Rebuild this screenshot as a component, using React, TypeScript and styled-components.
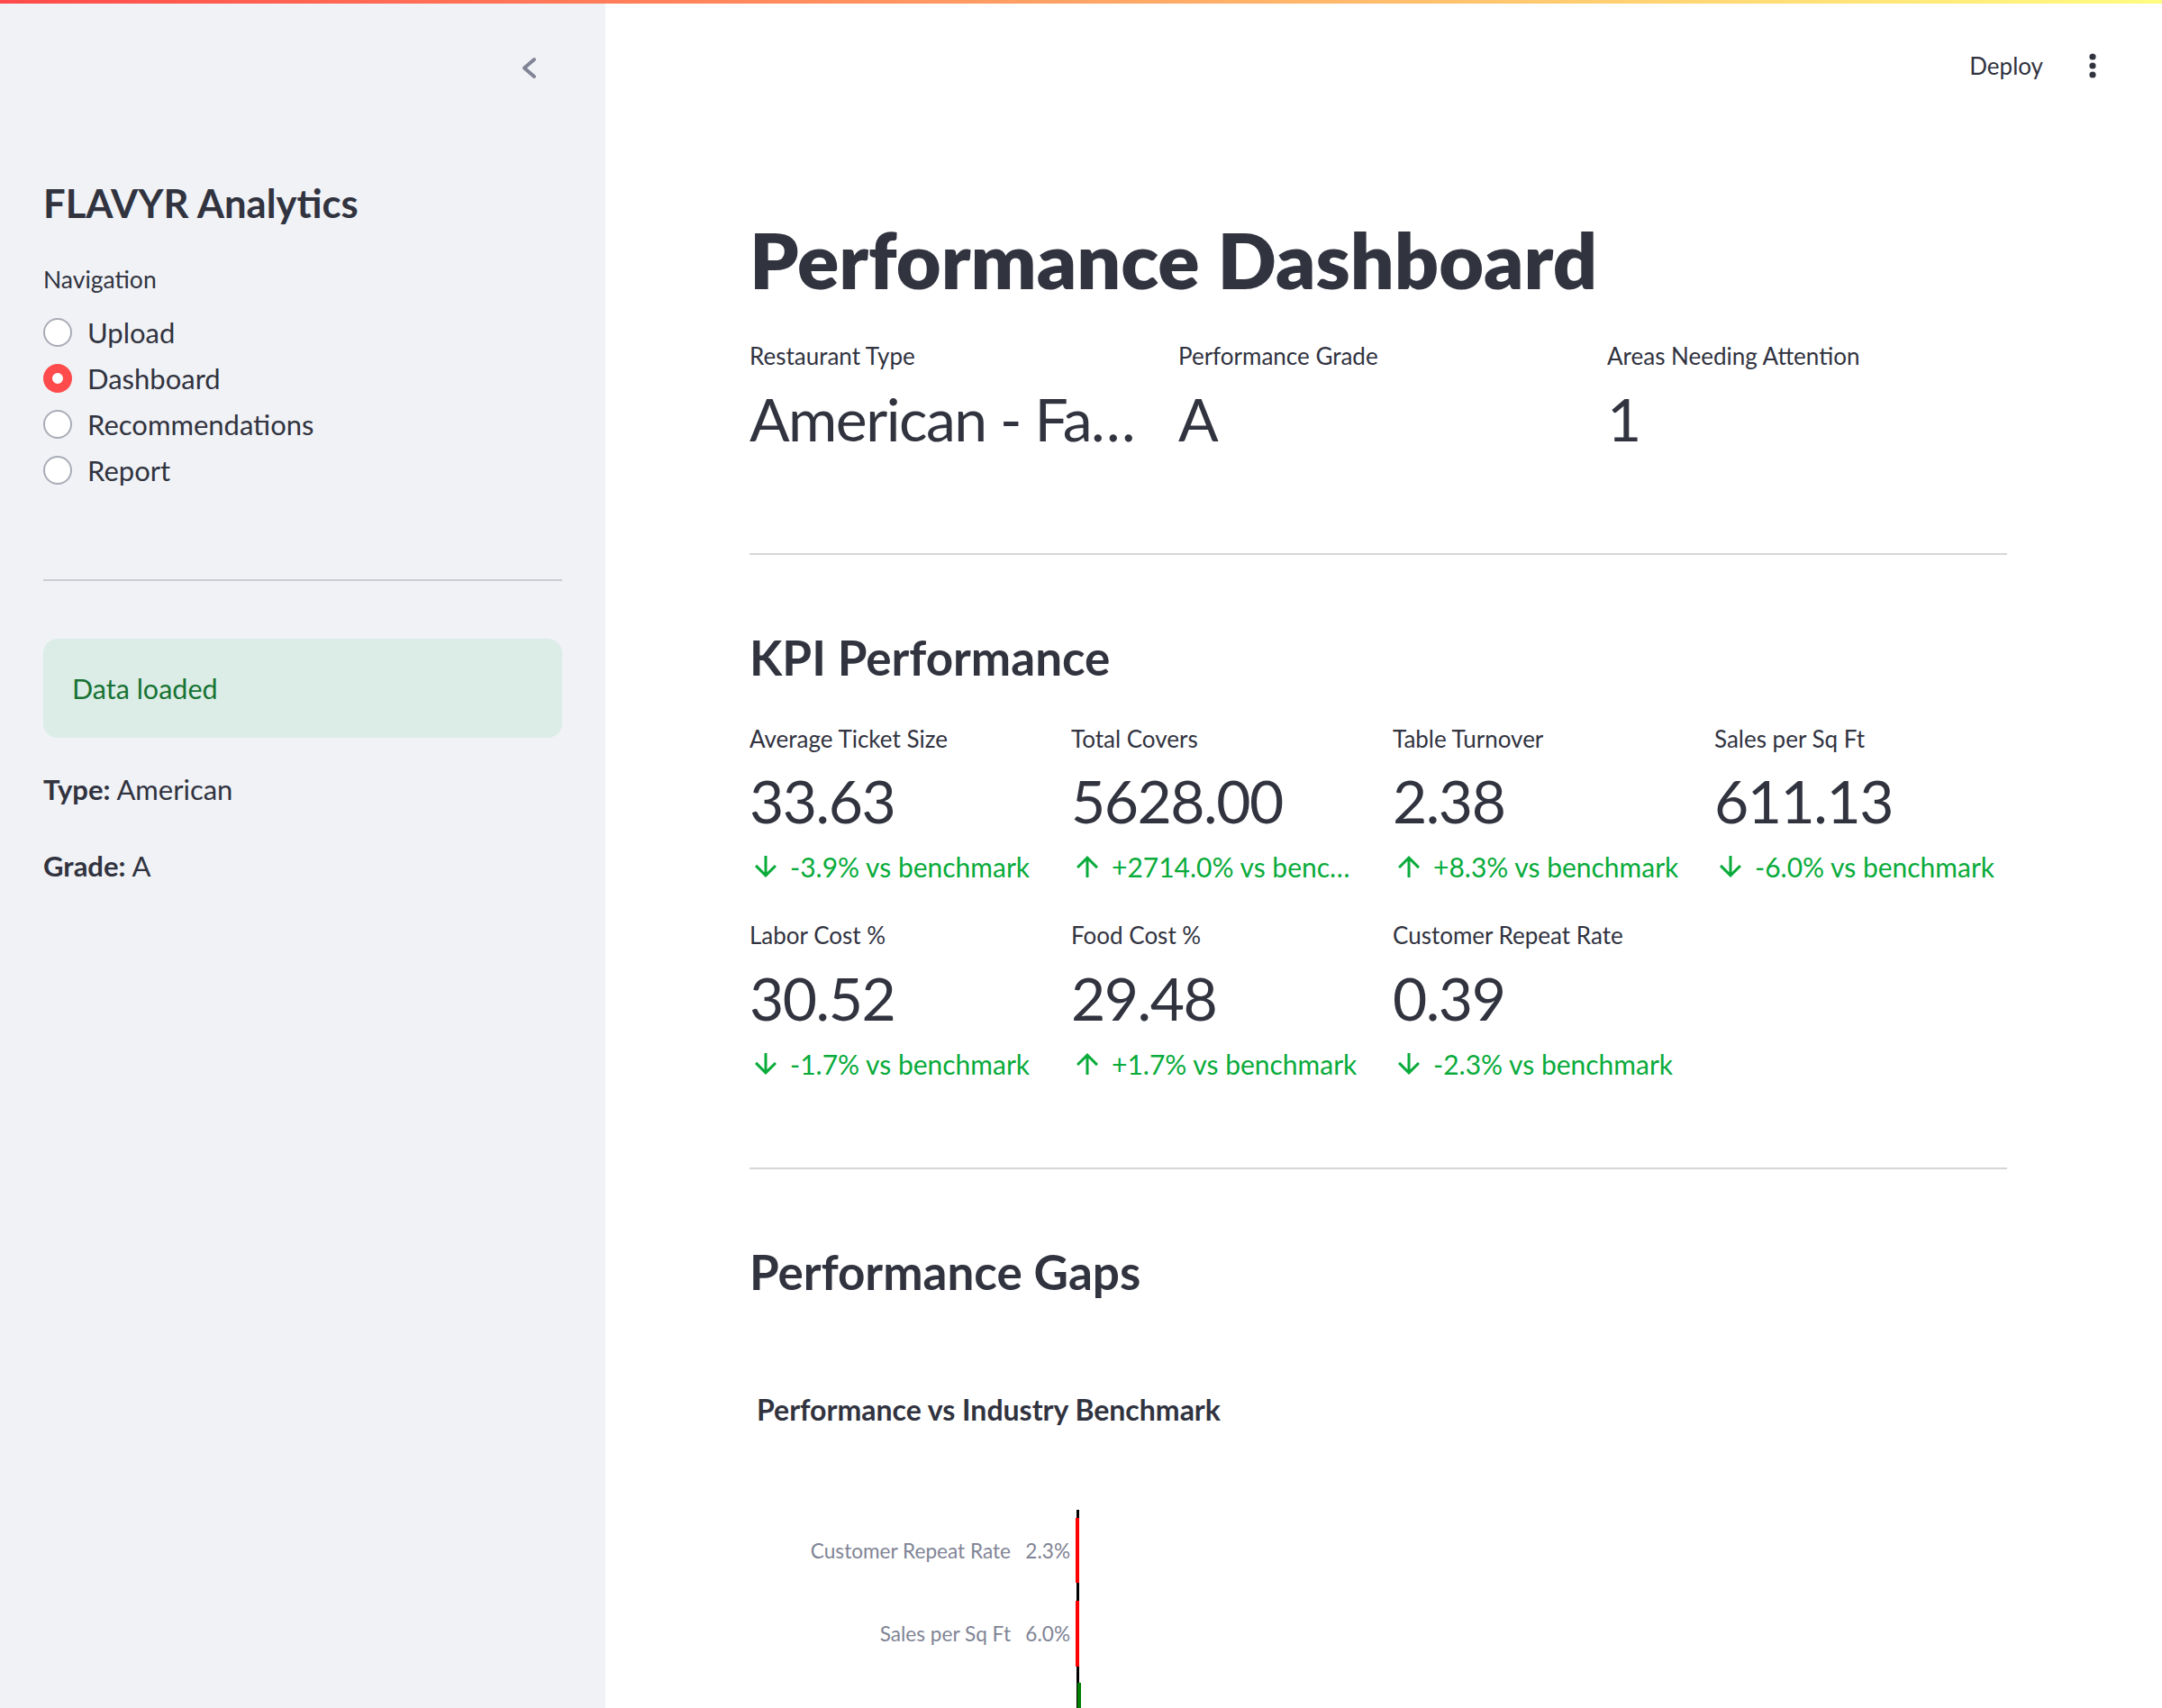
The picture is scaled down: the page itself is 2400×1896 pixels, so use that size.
import React from "react";
import styled, { createGlobalStyle } from "styled-components";

const GlobalStyle = createGlobalStyle`
  html, body { margin: 0; padding: 0; background: #ffffff; }
  body {
    font-family: "Lato", "Source Sans Pro", "Noto Sans", sans-serif;
    color: #31333f;
    -webkit-font-smoothing: antialiased;
  }
  * { box-sizing: border-box; }
`;

const Shell = styled.div`
  width: 2400px;
  height: 1896px;
  overflow: hidden;
  display: flex;
  flex-direction: column;
`;

const Decoration = styled.div`
  flex: none;
  height: 4px;
  background: linear-gradient(90deg, #ff4b4b, #fffd80);
`;

const Body = styled.div`
  flex: 1;
  min-height: 0;
  display: flex;
`;

/* ---------------- Sidebar ---------------- */

const Sidebar = styled.aside`
  flex: none;
  width: 672px;
  background: #f0f2f6;
  padding: 0 48px;
  display: flex;
  flex-direction: column;
`;

const SidebarHeader = styled.div`
  display: flex;
  justify-content: flex-end;
  padding-top: 55px;
  padding-right: 20px;
`;

const CollapseButton = styled.button`
  width: 32px;
  height: 32px;
  padding: 0;
  border: none;
  background: transparent;
  color: #808495;
  display: flex;
`;

const SidebarTitle = styled.h1`
  margin: 104px 0 0;
  font-size: 43.6px;
  font-weight: 700;
  line-height: 60px;
  color: #31333f;
`;

const WidgetLabel = styled.div`
  margin-top: 35px;
  font-size: 26.5px;
  line-height: 40px;
`;

const RadioList = styled.div`
  margin-top: 13px;
  display: flex;
  flex-direction: column;
`;

const RadioRow = styled.label`
  height: 51.2px;
  display: flex;
  align-items: center;
  gap: 17px;
  font-size: 31px;
`;

const RadioCircle = styled.span<{ $checked: boolean }>`
  flex: none;
  width: 32px;
  height: 32px;
  border-radius: 50%;
  background: #ffffff;
  border: ${(p) => (p.$checked ? "10px solid #ff4b4b" : "2px solid #a9acb6")};
`;

const SidebarRule = styled.hr`
  margin: 95px 0 0;
  border: none;
  height: 2px;
  background: #cbcdd3;
`;

const SuccessBox = styled.div`
  margin-top: 64px;
  height: 110px;
  border-radius: 16px;
  background: #dbede6;
  color: #177233;
  padding: 0 32px;
  display: flex;
  align-items: center;
  font-size: 30.5px;
`;

const InfoLine = styled.p<{ $gap: number }>`
  margin: ${(p) => p.$gap}px 0 0;
  font-size: 31px;
  line-height: 51px;
  b { font-weight: 700; }
`;

/* ---------------- Main ---------------- */

const Main = styled.main`
  flex: 1;
  min-width: 0;
  display: flex;
  flex-direction: column;
  background: #ffffff;
`;

const Toolbar = styled.header`
  flex: none;
  height: 137px;
  display: flex;
  justify-content: flex-end;
  align-items: center;
  gap: 35px;
  padding-right: 57px;
`;

const DeployButton = styled.button`
  border: none;
  background: transparent;
  padding: 0;
  font-family: inherit;
  font-size: 26px;
  color: #31333f;
`;

const MenuButton = styled.button`
  width: 40px;
  height: 40px;
  padding: 0;
  border: none;
  background: transparent;
  display: flex;
`;

const Content = styled.div`
  width: 1396px;
  margin-left: 160px;
  display: flex;
  flex-direction: column;
`;

const PageTitle = styled.h1`
  margin: 96.5px 0 0;
  font-size: 86px;
  font-weight: 800;
  line-height: 100px;
  color: #31333f;
`;

const MetricGrid = styled.div<{ $cols: number; $gap: number }>`
  margin-top: ${(p) => p.$gap}px;
  display: grid;
  grid-template-columns: repeat(${(p) => p.$cols}, minmax(0, 1fr));
  column-gap: 32px;
  row-gap: 32px;
`;

const Metric = styled.div`
  min-width: 0;
  display: flex;
  flex-direction: column;
`;

const MetricLabel = styled.div`
  font-size: 26px;
  line-height: 40px;
  white-space: nowrap;
  overflow: hidden;
  text-overflow: ellipsis;
`;

const MetricValue = styled.div`
  margin-top: 9.5px;
  padding-right: 12px;
  font-size: 66px;
  line-height: 80px;
  letter-spacing: -1.5px;
  white-space: nowrap;
  overflow: hidden;
  text-overflow: ellipsis;
`;

const Delta = styled.div`
  margin-top: 9px;
  height: 48px;
  display: flex;
  align-items: center;
  gap: 9px;
  color: #09ab3b;
  font-size: 30px;
`;

const DeltaText = styled.span`
  min-width: 0;
  white-space: nowrap;
  overflow: hidden;
  text-overflow: ellipsis;
`;

const Rule = styled.hr<{ $gap: number }>`
  margin: ${(p) => p.$gap}px 0 0;
  border: none;
  height: 2px;
  background: #d6d6d9;
`;

const SectionTitle = styled.h3`
  margin: 78px 0 0;
  font-size: 53px;
  font-weight: 700;
  line-height: 72px;
  color: #31333f;
`;

const ChartBlock = styled.section`
  display: flex;
  flex-direction: column;
`;

const ChartTitle = styled.div`
  margin-top: 95px;
  padding-left: 8px;
  font-size: 32px;
  font-weight: 700;
  line-height: 44px;
  color: #31333f;
`;

const ChartSvg = styled.svg`
  display: block;
  width: 1396px;
  height: 320px;
`;

/* ---------------- Data ---------------- */

const navItems = ["Upload", "Dashboard", "Recommendations", "Report"];

const summary = [
  { label: "Restaurant Type", value: "American - Fast Casual" },
  { label: "Performance Grade", value: "A" },
  { label: "Areas Needing Attention", value: "1" },
];

type Kpi = { label: string; value: string; delta: string; up: boolean };

const kpis: Kpi[] = [
  { label: "Average Ticket Size", value: "33.63", delta: "-3.9% vs benchmark", up: false },
  { label: "Total Covers", value: "5628.00", delta: "+2714.0% vs benchmark", up: true },
  { label: "Table Turnover", value: "2.38", delta: "+8.3% vs benchmark", up: true },
  { label: "Sales per Sq Ft", value: "611.13", delta: "-6.0% vs benchmark", up: false },
  { label: "Labor Cost %", value: "30.52", delta: "-1.7% vs benchmark", up: false },
  { label: "Food Cost %", value: "29.48", delta: "+1.7% vs benchmark", up: true },
  { label: "Customer Repeat Rate", value: "0.39", delta: "-2.3% vs benchmark", up: false },
];

const gaps = [
  { label: "Customer Repeat Rate", text: "2.3%", color: "#ff0000", y: 98, h: 72 },
  { label: "Sales per Sq Ft", text: "6.0%", color: "#ff0000", y: 190, h: 73 },
];

/* ---------------- Icons ---------------- */

const ChevronLeft = () => (
  <svg width="32" height="32" viewBox="0 0 32 32" fill="none">
    <polyline
      points="21,7 10,16.5 21,26"
      stroke="currentColor"
      strokeWidth="4"
      strokeLinecap="round"
      strokeLinejoin="round"
    />
  </svg>
);

const Kebab = () => (
  <svg width="40" height="40" viewBox="0 0 40 40">
    <circle cx="20" cy="10" r="3.6" fill="#31333f" />
    <circle cx="20" cy="20" r="3.6" fill="#31333f" />
    <circle cx="20" cy="30" r="3.6" fill="#31333f" />
  </svg>
);

const Arrow = ({ up }: { up: boolean }) => (
  <svg width="36" height="36" viewBox="0 0 24 24" style={{ flex: "none" }}>
    <path
      fill="currentColor"
      d={
        up
          ? "M4 12l1.41 1.41L11 7.83V20h2V7.83l5.58 5.59L20 12l-8-8-8 8z"
          : "M20 12l-1.41-1.41L13 16.17V4h-2v12.17l-5.58-5.59L4 12l8 8 8-8z"
      }
    />
  </svg>
);

/* ---------------- App ---------------- */

export default function App() {
  return (
    <>
      <GlobalStyle />
      <Shell>
        <Decoration />
        <Body>
          <Sidebar>
            <SidebarHeader>
              <CollapseButton aria-label="Collapse sidebar">
                <ChevronLeft />
              </CollapseButton>
            </SidebarHeader>
            <SidebarTitle>FLAVYR Analytics</SidebarTitle>
            <WidgetLabel>Navigation</WidgetLabel>
            <RadioList>
              {navItems.map((item) => (
                <RadioRow key={item}>
                  <RadioCircle $checked={item === "Dashboard"} />
                  {item}
                </RadioRow>
              ))}
            </RadioList>
            <SidebarRule />
            <SuccessBox>Data loaded</SuccessBox>
            <InfoLine $gap={32.5}>
              <b>Type:</b> American
            </InfoLine>
            <InfoLine $gap={34}>
              <b>Grade:</b> A
            </InfoLine>
          </Sidebar>

          <Main>
            <Toolbar>
              <DeployButton>Deploy</DeployButton>
              <MenuButton aria-label="Main menu">
                <Kebab />
              </MenuButton>
            </Toolbar>

            <Content>
              <PageTitle>Performance Dashboard</PageTitle>

              <MetricGrid $cols={3} $gap={37.5}>
                {summary.map((m) => (
                  <Metric key={m.label}>
                    <MetricLabel>{m.label}</MetricLabel>
                    <MetricValue>{m.value}</MetricValue>
                  </Metric>
                ))}
              </MetricGrid>

              <Rule $gap={109} />

              <SectionTitle>KPI Performance</SectionTitle>

              <MetricGrid $cols={4} $gap={34}>
                {kpis.map((k) => (
                  <Metric key={k.label}>
                    <MetricLabel>{k.label}</MetricLabel>
                    <MetricValue>{k.value}</MetricValue>
                    <Delta>
                      <Arrow up={k.up} />
                      <DeltaText>{k.delta}</DeltaText>
                    </Delta>
                  </Metric>
                ))}
              </MetricGrid>

              <Rule $gap={91} />

              <SectionTitle>Performance Gaps</SectionTitle>

              <ChartBlock>
                <ChartTitle>Performance vs Industry Benchmark</ChartTitle>
                <ChartSvg viewBox="0 0 1396 320">
                  <rect x="363" y="89" width="3" height="231" fill="#000000" />
                  {gaps.map((g) => (
                    <g key={g.label}>
                      <text
                        x="290"
                        y={g.y + g.h / 2}
                        textAnchor="end"
                        dominantBaseline="central"
                        fontSize="22.6"
                        fill="#808495"
                        fontFamily="Lato, sans-serif"
                      >
                        {g.label}
                      </text>
                      <text
                        x="356"
                        y={g.y + g.h / 2}
                        textAnchor="end"
                        dominantBaseline="central"
                        fontSize="22.6"
                        fill="#808495"
                        fontFamily="Lato, sans-serif"
                      >
                        {g.text}
                      </text>
                      <rect x="362" y={g.y} width="4" height={g.h} fill={g.color} />
                    </g>
                  ))}
                  <rect x="364" y="281" width="4" height="39" fill="#008000" />
                </ChartSvg>
              </ChartBlock>
            </Content>
          </Main>
        </Body>
      </Shell>
    </>
  );
}
